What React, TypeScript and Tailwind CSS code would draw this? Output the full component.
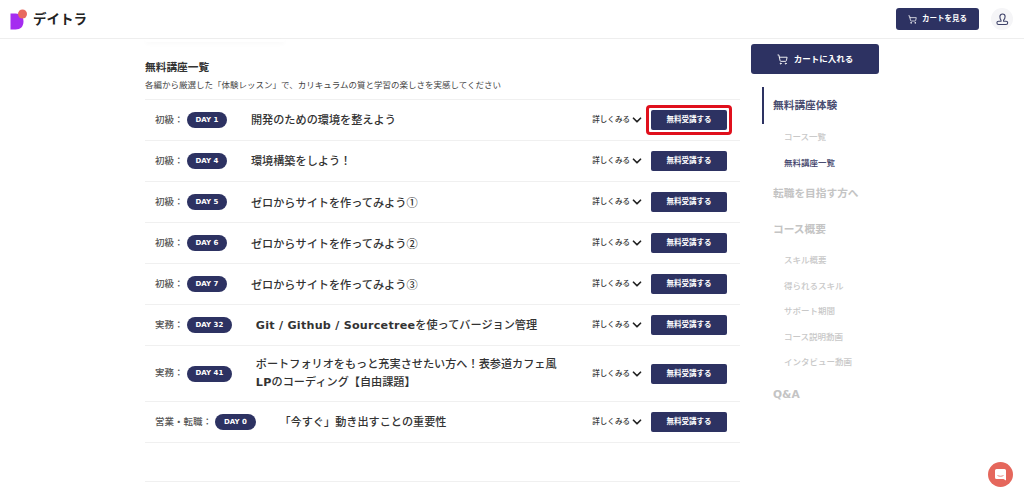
import type { ReactNode } from "react";
import { ShoppingCart, ChevronDown } from "lucide-react";

const cjk = "font-['DejaVu_Sans','Noto_Sans_CJK_JP',sans-serif]";

function Latin({ children }: { children: ReactNode }) {
  return <span className="font-bold tracking-[0.25px]">{children}</span>;
}

function Num({ children }: { children: ReactNode }) {
  return <span className="font-['Noto_Sans_CJK_JP',sans-serif]">{children}</span>;
}

const rows: { level: string; day: string; title: ReactNode; highlight?: boolean; tall?: boolean }[] = [
  { level: "初級：", day: "DAY 1", title: "開発のための環境を整えよう", highlight: true },
  { level: "初級：", day: "DAY 4", title: "環境構築をしよう！" },
  { level: "初級：", day: "DAY 5", title: <>ゼロからサイトを作ってみよう<Num>①</Num></> },
  { level: "初級：", day: "DAY 6", title: <>ゼロからサイトを作ってみよう<Num>②</Num></> },
  { level: "初級：", day: "DAY 7", title: <>ゼロからサイトを作ってみよう<Num>③</Num></> },
  { level: "実務：", day: "DAY 32", title: <><Latin>Git / Github / Sourcetree</Latin>を使ってバージョン管理</> },
  { level: "実務：", day: "DAY 41", title: <>ポートフォリオをもっと充実させたい方へ！表参道カフェ風<Latin>LP</Latin>のコーディング【自由課題】</>, tall: true },
  { level: "営業・転職：", day: "DAY 0", title: "「今すぐ」動き出すことの重要性" },
];

function Row({ level, day, title, highlight, tall }: { level: string; day: string; title: ReactNode; highlight?: boolean; tall?: boolean }) {
  return (
    <div className={`flex items-center border-b border-[#f0f0f0] pl-[10px] pr-[8px] ${tall ? "h-[56px]" : "h-[41px]"}`}>
      <span className="text-[9.5px] font-medium text-[#555] whitespace-nowrap">{level}</span>
      <span className="ml-[3px] flex h-[16px] items-center rounded-full bg-[#2d3262] px-[9px] text-[7px] font-bold text-white whitespace-nowrap">
        {day}
      </span>
      <div className="ml-[23.5px] mt-[1px] w-[306px] text-[11.15px] leading-[18px] font-medium text-[#333]">{title}</div>
      <div className="ml-auto flex items-center">
        <span className="text-[7.5px] font-medium text-[#333] whitespace-nowrap">詳しくみる</span>
        <ChevronDown size={14} strokeWidth={3} className="text-[#222]" />
      </div>
      <div className={`ml-[2px] rounded-[4px] border-[3px] p-[2px] ${highlight ? "border-[#e0101c]" : "border-transparent"}`}>
        <button className="flex h-[20px] w-[76px] items-center justify-center rounded-[2px] bg-[#2d3262] text-[7.5px] font-bold text-white">
          無料受講する
        </button>
      </div>
    </div>
  );
}

function SideHead({ children, active }: { children: ReactNode; active?: boolean }) {
  return <div className={`text-[10.7px] font-bold leading-[18px] ${active ? "text-[#4a4d70]" : "text-[#c4c4c4]"}`}>{children}</div>;
}

function SideItem({ children, active }: { children: ReactNode; active?: boolean }) {
  return <div className={`h-[25.5px] pl-[11px] text-[8.5px] leading-[25px] font-medium ${active ? "text-[#3d4168]" : "text-[#c8c8c8]"}`}>{children}</div>;
}

export default function App() {
  return (
    <div className={`relative h-[498px] w-[1024px] overflow-hidden bg-white ${cjk}`}>
      <header className="flex h-[39px] items-center border-b border-[#eeeeee] pl-[10px] pr-[11px]">
        <svg width="18" height="21" viewBox="0 0 18 21">
          <path d="M0.5 4.5h5c5 0 8 3 8 8s-3 8-8 8h-5z" fill="#a52cf0" />
          <circle cx="12.5" cy="5" r="4.5" fill="#e8695f" />
        </svg>
        <span className="ml-[5px] text-[13.5px] font-bold text-[#222]">デイトラ</span>
        <button className="ml-auto flex h-[22px] w-[83px] items-center justify-center gap-[5px] rounded-[3px] bg-[#2d3262] text-[7.5px] font-bold text-white">
          <ShoppingCart size={9} />
          カートを見る
        </button>
        <div className="ml-[12px] flex h-[22px] w-[22px] items-center justify-center rounded-full bg-[#f5f5f7]">
          <svg width="13" height="13" viewBox="0 0 13 13" fill="none" stroke="#3d4168" strokeWidth="1.1">
            <path d="M6.5 1a2.6 2.6 0 0 1 2.6 2.6c0 1.6-.8 3-1.5 3.6v1h2.4c1 0 1.7.7 1.7 1.5s-.7 1.8-1.7 1.8H2.6c-1 0-1.7-.9-1.7-1.8s.7-1.5 1.7-1.5H5v-1C4.300 6.600 3.900 5.200 3.900 3.600A2.600 2.600 0 0 1 6.500 1z" />
          </svg>
        </div>
      </header>

      <div className="ml-[145px] flex">
        <main className="w-[595px]">
          <div className="h-[3px] w-[140px] rounded-b-full shadow-[0_2px_4px_rgba(0,0,0,0.03)]" />
          <h2 className="mt-[18px] text-[10.7px] leading-[16px] font-bold text-[#333]">無料講座一覧</h2>
          <p className="mt-[2px] text-[8.5px] leading-[14px] text-[#444]">
            各編から厳選した「体験レッスン」で、カリキュラムの質と学習の楽しさを実感してください
          </p>
          <div className="mt-[7px] border-t border-[#f0f0f0]">
            {rows.map((row) => (
              <Row key={row.day} {...row} />
            ))}
          </div>
          <div className="mt-[38px] border-t border-[#f0f0f0]" />
        </main>

        <aside className="ml-[11px] w-[128px] pt-[5px]">
          <button className="flex h-[30px] w-[128px] items-center justify-center gap-[6px] rounded-[3px] bg-[#2d3262] text-[8.5px] font-bold text-white">
            <ShoppingCart size={11} />
            カートに入れる
          </button>
          <div className="mt-[13px] ml-[11px]">
            <div className="flex h-[37px] items-center border-l-[2px] border-[#2d3262] pl-[9px]">
              <SideHead active>無料講座体験</SideHead>
            </div>
            <div className="mt-[1px] pl-[11px]">
              <SideItem>コース一覧</SideItem>
              <SideItem active>無料講座一覧</SideItem>
              <div className="mt-[9px]"><SideHead>転職を目指す方へ</SideHead></div>
              <div className="mt-[18px]"><SideHead>コース概要</SideHead></div>
              <div className="mt-[9px]">
                <SideItem>スキル概要</SideItem>
                <SideItem>得られるスキル</SideItem>
                <SideItem>サポート期間</SideItem>
                <SideItem>コース説明動画</SideItem>
                <SideItem>インタビュー動画</SideItem>
              </div>
              <div className="mt-[10px]"><SideHead>Q&amp;A</SideHead></div>
            </div>
          </div>
        </aside>
      </div>

      <div className="absolute left-[988px] top-[462px] flex h-[25px] w-[25px] items-center justify-center rounded-full bg-[#e5675c]">
        <svg width="13" height="13" viewBox="0 0 13 13">
          <path d="M2.5 1h8a1.5 1.5 0 0 1 1.500 1.500V12.500l-2.500-1.500h-7A1.500 1.500 0 0 1 1 9.500V2.500A1.500 1.500 0 0 1 2.500 1z" fill="#fff" />
          <path d="M3.500 7.500c1.800 1 4.200 1 6 0" fill="none" stroke="#e5675c" strokeWidth="0.8" />
        </svg>
      </div>
    </div>
  );
}
